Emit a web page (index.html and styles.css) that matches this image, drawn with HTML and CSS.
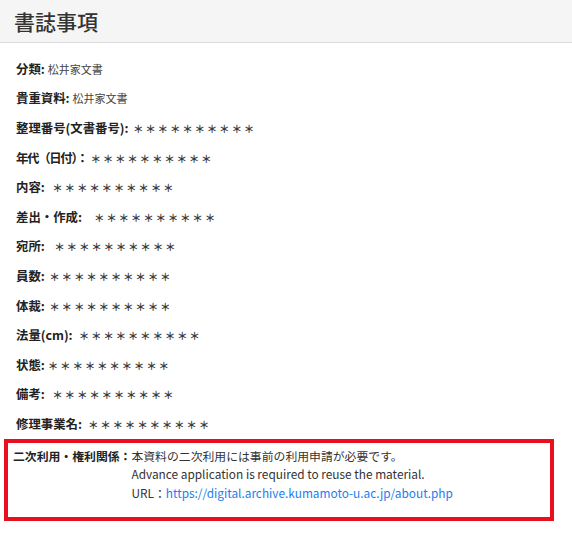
FILE: index.html
```html
<!DOCTYPE html>
<html lang="ja">

<head>
    <meta charset="UTF-8">
    <title>書誌事項</title>
    <link rel="stylesheet" href="styles.css">
</head>

<body>
    <div class="section-header">
        <h2>書誌事項</h2>
    </div>

    <div class="biblio">
        <div class="row">
            <span class="label">分類:</span>
            <span class="value">松井家文書</span>
        </div>
        <div class="row">
            <span class="label">貴重資料:</span>
            <span class="value">松井家文書</span>
        </div>
        <div class="row">
            <span class="label">整理番号(文書番号):</span>
            <span class="stars gap-xs">＊＊＊＊＊＊＊＊＊＊</span>
        </div>
        <div class="row">
            <span class="label tight">年代（日付）：</span>
            <span class="stars gap-xxs">＊＊＊＊＊＊＊＊＊＊</span>
        </div>
        <div class="row">
            <span class="label">内容:</span>
            <span class="stars gap-m">＊＊＊＊＊＊＊＊＊＊</span>
        </div>
        <div class="row">
            <span class="label">差出・作成:</span>
            <span class="stars gap-xl">＊＊＊＊＊＊＊＊＊＊</span>
        </div>
        <div class="row">
            <span class="label">宛所:</span>
            <span class="stars gap-l">＊＊＊＊＊＊＊＊＊＊</span>
        </div>
        <div class="row">
            <span class="label">員数:</span>
            <span class="stars gap-xs">＊＊＊＊＊＊＊＊＊＊</span>
        </div>
        <div class="row">
            <span class="label">体裁:</span>
            <span class="stars gap-xs">＊＊＊＊＊＊＊＊＊＊</span>
        </div>
        <div class="row">
            <span class="label">法量(cm):</span>
            <span class="stars gap-s">＊＊＊＊＊＊＊＊＊＊</span>
        </div>
        <div class="row">
            <span class="label">状態:</span>
            <span class="stars gap-xxs">＊＊＊＊＊＊＊＊＊＊</span>
        </div>
        <div class="row">
            <span class="label">備考:</span>
            <span class="stars gap-m">＊＊＊＊＊＊＊＊＊＊</span>
        </div>
        <div class="row">
            <span class="label">修理事業名:</span>
            <span class="stars gap-s">＊＊＊＊＊＊＊＊＊＊</span>
        </div>
    </div>

    <!-- 二次利用の注意書き -->
    <div class="rights-box">
        <div class="rights-label">二次利用・権利関係：</div>
        <div class="rights-text">
            <div>本資料の二次利用には事前の利用申請が必要です。</div>
            <div>Advance application is required to reuse the material.</div>
            <div>URL：<a href="https://digital.archive.kumamoto-u.ac.jp/about.php">https://digital.archive.kumamoto-u.ac.jp/about.php</a></div>
        </div>
    </div>
</body>

</html>
```

FILE: styles.css
```css
body {
    margin: 0;
    background: #fff;
    color: #222;
    font-family: "Noto Sans CJK JP", "Noto Sans", sans-serif;
}

.section-header {
    height: 42px;
    background-color: #f5f5f5;
    border-bottom: 1px solid #dcdcdc;
    display: flex;
    align-items: center;
    padding-left: 14px;
}

.section-header h2 {
    margin: 0;
    font-size: 21px;
    font-weight: 500;
    color: #333;
    line-height: 1;
}

.biblio {
    padding: 11px 0 0 16px;
}

.row {
    height: 29.6px;
    display: flex;
    align-items: center;
}

.label {
    font-size: 12.4px;
    font-weight: 700;
    color: #222;
}

.label.tight {
    letter-spacing: -1.3px;
}

.value {
    margin-left: 3px;
    font-size: 11px;
    color: #444;
}

/* 伏字の＊ */
.stars {
    font-size: 10.6px;
    font-weight: 700;
    letter-spacing: 1.7px;
    color: #3a3a3a;
    padding-top: 1px;
}

.gap-xxs {
    margin-left: 3px;
}

.gap-xs {
    margin-left: 4.5px;
}

.gap-s {
    margin-left: 6px;
}

.gap-m {
    margin-left: 7.5px;
}

.gap-l {
    margin-left: 9.5px;
}

.gap-xl {
    margin-left: 12px;
}

.rights-box {
    width: 537px;
    margin-left: 4px;
    border: 4px solid #e8101f;
    padding: 4px 0 15px 5px;
    display: flex;
    font-size: 11.85px;
    line-height: 18.5px;
}

.rights-label {
    font-weight: 700;
    color: #222;
}

.rights-text {
    color: #333;
}

.rights-text a {
    color: #1a7ef0;
    text-decoration: none;
}
```
